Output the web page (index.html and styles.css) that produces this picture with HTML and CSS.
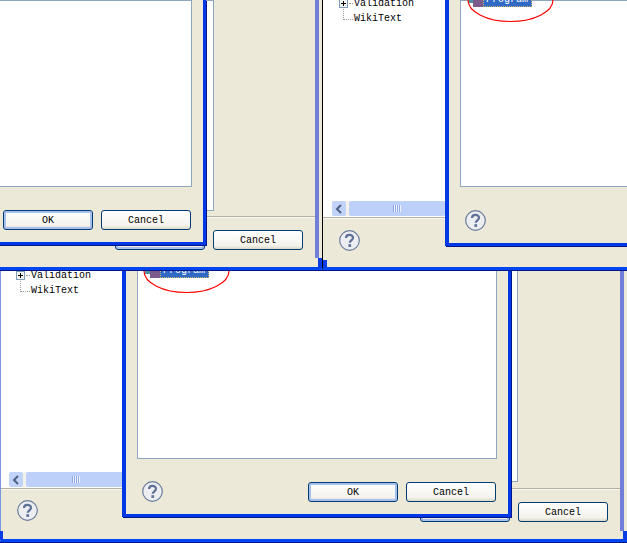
FILE: index.html
```html
<!DOCTYPE html>
<html lang="en">
<head>
    <meta charset="UTF-8">
    <title>Properties</title>
    <link rel="stylesheet" href="styles.css">
</head>
<body>
    <svg class="defs" width="0" height="0">
        <symbol id="help" viewBox="0 0 21 21">
            <circle cx="10.5" cy="10.5" r="9.8" fill="#eceef1" stroke="#6b7c9c" stroke-width="1.2"/>
            <path d="M7 8C7 3.8 14 3.8 14 7.8 14 10.2 10.7 10.4 10.7 12.8" fill="none" stroke="#5f7096" stroke-width="2.2"/>
            <rect x="9.4" y="14.2" width="2.7" height="2.7" fill="#5f7096"/>
        </symbol>
    </svg>

    <div class="desk">
        <!-- bottom window -->
        <div class="win outer outer-c">
            <div class="list list-d"></div>
            <div class="tree tree-c">
                <div class="node"><span class="plus"></span><span class="dots"></span>Validation</div>
                <div class="node"><span class="elbow"></span>WikiText</div>
            </div>
            <div class="scroll scroll-c"><span class="arrow"><svg width="8" height="10" viewBox="0 0 8 10"><path d="M6 1 2 5l4 4" fill="none" stroke="#4d6185" stroke-width="2"/></svg></span><span class="thumb"><i></i></span></div>
            <div class="rule rule-c"></div>
            <div class="btn default behind-c"></div>
            <div class="btn cancel-c">Cancel</div>
            <svg class="help help-d" width="21" height="21"><use href="#help"/></svg>
            <div class="strip strip-c"></div>
        </div>
        <div class="corner corner-c1"></div>
        <div class="corner corner-c2"></div>
        <div class="win inner inner-c">
            <div class="list list-e"></div>
            <div class="selected sel-e"><span class="icon"></span><span class="label">Program</span></div>
            <svg class="help help-e" width="21" height="21"><use href="#help"/></svg>
            <div class="btn default ok-c">OK</div>
            <div class="btn cancel-e">Cancel</div>
        </div>
        <svg class="ring ring-e" width="88" height="44" viewBox="0 0 88 44"><ellipse cx="43.5" cy="21" rx="42.5" ry="21.5" fill="none" stroke="#f00" stroke-width="1.2"/></svg>

        <!-- top left window -->
        <div class="win outer outer-a">
            <div class="list list-a"></div>
            <div class="rule rule-a"></div>
            <div class="btn default behind-a"></div>
            <div class="btn cancel-a">Cancel</div>
            <div class="strip strip-a"></div>
        </div>
        <div class="corner corner-a"></div>
        <div class="win inner inner-a">
            <div class="list list-b"></div>
            <div class="btn default ok-a">OK</div>
            <div class="btn cancel-b">Cancel</div>
        </div>

        <!-- top right window -->
        <div class="win outer outer-b">
            <div class="tree tree-b">
                <div class="node"><span class="plus"></span><span class="dots"></span>Validation</div>
                <div class="node"><span class="elbow"></span>WikiText</div>
            </div>
            <div class="scroll scroll-b"><span class="arrow"><svg width="8" height="10" viewBox="0 0 8 10"><path d="M6 1 2 5l4 4" fill="none" stroke="#4d6185" stroke-width="2"/></svg></span><span class="thumb"><i></i></span></div>
            <div class="rule rule-b"></div>
            <svg class="help help-b" width="21" height="21"><use href="#help"/></svg>
        </div>
        <div class="corner corner-b"></div>
        <div class="win inner inner-b">
            <div class="list list-c"></div>
            <div class="selected sel-c"><span class="icon"></span><span class="label">Program</span></div>
            <svg class="help help-c" width="21" height="21"><use href="#help"/></svg>
        </div>
        <svg class="ring ring-c" width="88" height="44" viewBox="0 0 88 44"><ellipse cx="43.5" cy="21" rx="42.5" ry="21.5" fill="none" stroke="#f00" stroke-width="1.2"/></svg>
    </div>
</body>
</html>
```

FILE: styles.css
```css
body {
    margin: 0;
    background-color: white;
    font-family: "Liberation Mono", "DejaVu Sans Mono", monospace;
    font-size: 10px;
    color: black;
}
.desk {
    position: relative;
    width: 627px;
    height: 543px;
    overflow: hidden;
}
.defs {
    position: absolute;
}

/* windows on the desktop */
.win {
    position: absolute;
    box-sizing: border-box;
    background-color: #ece9d8;
    border: 0 solid #0046f0;
    box-shadow: 0 1px 0 #00168f;
}
.outer {
    border-bottom-width: 3px;
}
.inner {
    border-width: 0 3px 3px 4px;
    border-color: #0038e6;
    box-shadow: 1px 1px 0 #00168f;
}
.outer-a { left: 0; top: 0; width: 322px; height: 270px; }
.inner-a { left: -4px; top: 0; width: 210px; height: 245px; }
.outer-b { left: 322px; top: 0; width: 305px; height: 270px; border-left: 1px solid black; }
.inner-b { left: 445px; top: 0; width: 200px; height: 246px; }
.outer-c { left: 0; top: 250px; width: 627px; height: 292px; border-left: 1px solid #7a96e0; }
.inner-c { left: 122px; top: 250px; width: 389px; height: 267px; }

.strip {
    position: absolute;
    top: 0;
    width: 4px;
    background-color: #6f7fd8;
}
.strip-a { left: 315px; height: 258px; }
.strip-c { left: 619px; height: 281px; }
.corner {
    position: absolute;
    background-color: #0a3ce6;
}
.corner-a { left: 318px; top: 258px; width: 4px; height: 10px; }
.corner-b { left: 323px; top: 260px; width: 4px; height: 8px; }
.corner-c1 { left: 0; top: 531px; width: 3px; height: 9px; }
.corner-c2 { left: 623px; top: 531px; width: 4px; height: 9px; }

/* white panes */
.list {
    position: absolute;
    top: 0;
    box-sizing: border-box;
    background-color: white;
    border: 1px solid #8fa6bf;
}
.list-a { left: 0; width: 214px; height: 211px; }
.list-b { left: -1px; width: 193px; height: 187px; }
.list-c { left: 11px; width: 300px; height: 187px; }
.list-d { left: 380px; width: 137px; height: 232px; }
.list-e { left: 11px; width: 360px; height: 209px; }
.rule {
    position: absolute;
    height: 1px;
    background-color: #b4b0a2;
    border-bottom: 1px solid #f7f6f0;
}
.rule-a { left: 0; top: 216px; width: 315px; }
.rule-b { left: 0; top: 217px; width: 122px; }
.rule-c { left: 0; top: 238px; width: 619px; }
.tree {
    position: absolute;
    box-sizing: border-box;
    background-color: white;
}
.tree-b { left: 0; top: -4px; width: 122px; height: 221px; }
.tree-c { left: 0; top: 0; width: 124px; height: 238px; padding-top: 18px; }
.node {
    display: flex;
    align-items: center;
    height: 15px;
    padding-left: 16px;
    white-space: nowrap;
}
.tree-c .node {
    padding-left: 15px;
}
.plus {
    width: 9px;
    height: 9px;
    box-sizing: border-box;
    border: 1px solid #7f9db9;
    background: linear-gradient(#000, #000) center / 5px 1px no-repeat,
                linear-gradient(#000, #000) center / 1px 5px no-repeat,
                #f4f4ee;
}
.dots {
    width: 4px;
    margin: 0 1px;
    border-top: 1px dotted #999;
}
.elbow {
    width: 10px;
    height: 11px;
    margin: -9px 1px 0 4px;
    border-left: 1px dotted #999;
    border-bottom: 1px dotted #999;
    box-sizing: border-box;
}

/* buttons */
.btn {
    position: absolute;
    box-sizing: border-box;
    width: 90px;
    height: 20px;
    border: 1px solid #003c74;
    border-radius: 3px;
    background: linear-gradient(#fff, #f4f3ec 80%, #dcd8c8);
    text-align: center;
    line-height: 20px;
}
.btn.default {
    box-shadow: inset 0 0 0 2px #a8c0ec;
}
.ok-a { left: 3px; top: 210px; }
.cancel-b { left: 101px; top: 210px; }
.behind-a { left: 115px; top: 230px; }
.cancel-a { left: 213px; top: 230px; }
.ok-c { left: 182px; top: 232px; }
.cancel-e { left: 280px; top: 232px; }
.behind-c { left: 419px; top: 252px; }
.cancel-c { left: 517px; top: 252px; }

/* tree scrollbar */
.scroll {
    position: absolute;
    display: flex;
    gap: 3px;
    height: 15px;
    background-color: #f3f1ea;
}
.scroll-b { left: 9px; top: 201px; width: 113px; }
.scroll-c { left: 8px; top: 222px; width: 116px; }
.arrow {
    display: flex;
    align-items: center;
    justify-content: center;
    width: 14px;
    background-color: #c2d3fa;
    border-radius: 2px;
}
.thumb {
    flex: 1;
    display: flex;
    align-items: center;
    justify-content: center;
    background-color: #bdd0f9;
    border-radius: 2px;
}
.thumb i {
    width: 8px;
    height: 7px;
    background: repeating-linear-gradient(90deg, #8fa8e4 0 1px, #eef3fe 1px 2px);
}

.help {
    position: absolute;
}
.help-b { left: 16px; top: 230px; }
.help-c { left: 16px; top: 210px; }
.help-d { left: 16px; top: 250px; }
.help-e { left: 16px; top: 231px; }

/* selected tree row with the red circle */
.selected {
    position: absolute;
    display: flex;
    align-items: stretch;
    height: 16px;
}
.sel-c { left: 19px; top: -9px; }
.sel-e { left: 19px; top: 12px; }
.icon {
    width: 15px;
    background: linear-gradient(#7a5b8c, #7a5b8c) right bottom / 10px 7px no-repeat,
                linear-gradient(#4f8fa0, #4f8fa0) left 9px / 6px 3px no-repeat;
}
.label {
    padding: 2px 4px 0 3px;
    line-height: 13px;
    color: white;
    background-color: #316ac5;
    outline: 1px dotted #c9b66b;
    outline-offset: -1px;
}
.ring {
    position: absolute;
}
.ring-c { left: 467px; top: -21px; }
.ring-e { left: 143px; top: 250px; }
```
